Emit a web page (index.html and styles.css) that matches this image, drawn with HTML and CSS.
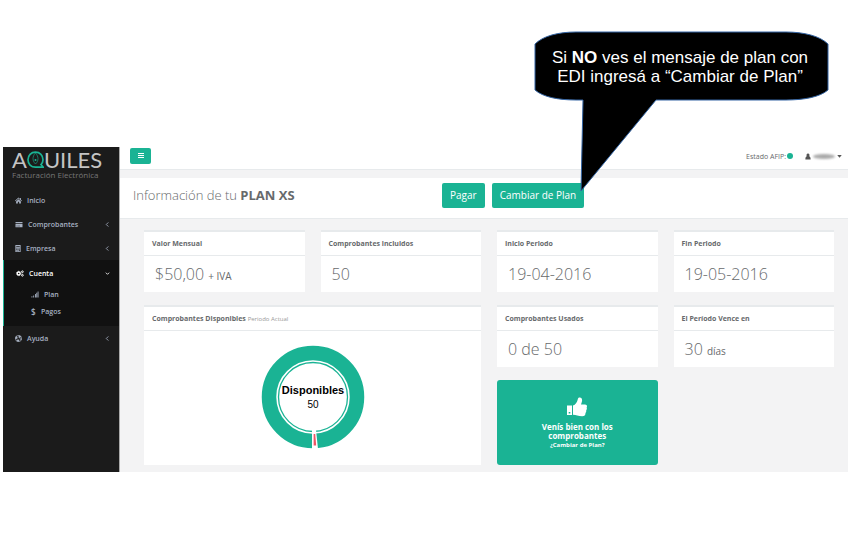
FILE: index.html
```html
<!DOCTYPE html>
<html lang="es">
<head>
<meta charset="utf-8">
<title>Aquiles - Facturación Electrónica</title>
<link rel="stylesheet" href="styles.css">
</head>
<body>
<div class="app">
  <aside class="sidebar">
    <div class="brand">
      <div class="brand-name"><span>A</span><svg class="brand-q" viewBox="0 0 17 18" role="img" aria-label="Q"><path d="M8.500 1.200C4 1.200 1 4.500 1 8.800S4 16.200 8.500 16.200H16.300L14 13.500C15.300 12.300 16 10.800 16 8.800 16 4.500 13 1.200 8.500 1.200Z" fill="none" stroke="#1ab394" stroke-width="1.700"/><path d="M8.500 2C5.200 5.500 5.200 10 8.500 13 11.800 10 11.800 5.500 8.500 2Z" fill="none" stroke="#1ab394" stroke-width=".6"/><circle cx="8.500" cy="9" r="1" fill="#1ab394"/></svg><span>UILES</span></div>
      <div class="brand-sub">Facturación Electrónica</div>
    </div>
    <nav>
      <a class="item" href="#"><svg class="icon" viewBox="0 0 16 16"><path d="M8 1 0 8.500l1.200 1.200L8 3.600l6.800 6.100L16 8.500l-2.500-2.300V2h-2v2.300zM8 5 2.500 10v5h4v-4h3v4h4v-5z"/></svg>Inicio</a>
      <a class="item" href="#"><svg class="icon wide" viewBox="0 0 18 16"><path d="M1 2h16v3H1zM1 7h16v7H1zM3 11v1h3v-1zM7 11v1h4v-1z" fill-rule="evenodd"/></svg>Comprobantes<svg class="chev" viewBox="0 0 6 6"><path d="M4 .5 1.500 3 4 5.500"/></svg></a>
      <a class="item" href="#"><svg class="icon slim" viewBox="0 0 12 16"><path d="M0 0h12v16H0zM2 2v2h8V2zM2 6v2h2V6zm3 0v2h2V6zm3 0v2h2V6zM2 9.500v2h2v-2zm3 0v2h2v-2zM2 13v1.500h5V13zm6-3.500v5h2v-5z" fill-rule="evenodd"/></svg>Empresa<svg class="chev" viewBox="0 0 6 6"><path d="M4 .5 1.500 3 4 5.500"/></svg></a>
      <div class="group">
        <a class="item current" href="#"><svg class="icon wide" viewBox="0 0 18 16"><g fill="none" stroke="currentColor"><circle cx="6" cy="8" r="3.400" stroke-width="3"/><circle cx="6" cy="8" r="5" stroke-width="2" stroke-dasharray="2 1.930"/><circle cx="14.500" cy="4" r="2" stroke-width="2.200"/><circle cx="14.500" cy="12" r="2" stroke-width="2.200"/></g></svg>Cuenta<svg class="chev" viewBox="0 0 6 6"><path d="M1 2 3 4 5 2"/></svg></a>
        <a class="subitem" href="#"><svg class="icon wide" viewBox="0 0 18 16"><path d="M1 12h2v3H1zM5 10h2v5H5zM9 7h2v8H9zM12 4h2v11h-2zM15 1h2v14h-2z"/></svg>Plan</a>
        <a class="subitem" href="#"><span class="dollar">$</span>Pagos</a>
      </div>
      <a class="item" href="#"><svg class="icon" viewBox="0 0 16 16"><g fill="none" stroke="currentColor"><circle cx="8" cy="8" r="7" stroke-width="1.600"/><circle cx="8" cy="8" r="5" stroke-width="5" stroke-dasharray="4.500 3.354" stroke-dashoffset="2.250"/></g></svg>Ayuda<svg class="chev" viewBox="0 0 6 6"><path d="M4 .5 1.500 3 4 5.500"/></svg></a>
    </nav>
  </aside>
  <main class="main">
    <header class="topbar">
      <button class="menu" type="button" aria-label="Menú"><svg viewBox="0 0 8 8"><path d="M1 1.500h6M1 3.500h6M1 5.500h6" stroke="#fff"/></svg></button>
      <div class="status">Estado AFIP:<span class="dot"></span></div>
      <button class="user" type="button" aria-label="Usuario"><svg class="person" viewBox="0 0 8 8"><path d="M4 0a2 2.200 0 0 1 1.400 3.800C7 4 7.500 5.500 7.500 8h-7c0-2.500.5-4 2.100-4.200A2 2.200 0 0 1 4 0z"/></svg><span class="smudge"></span><svg class="caret" viewBox="0 0 6 4"><path d="M0 0h6L3 3.500z"/></svg></button>
    </header>
    <section class="heading">
      <h1>Información de tu <strong>PLAN XS</strong></h1>
      <div class="actions"><button type="button">Pagar</button><button type="button">Cambiar de Plan</button></div>
    </section>
    <section class="cards">
      <article class="card"><h2>Valor Mensual</h2><p>$50,00 <small>+ IVA</small></p></article>
      <article class="card"><h2>Comprobantes incluidos</h2><p>50</p></article>
      <article class="card"><h2>Inicio Periodo</h2><p>19-04-2016</p></article>
      <article class="card"><h2>Fin Periodo</h2><p>19-05-2016</p></article>
      <article class="card chart"><h2>Comprobantes Disponibles <small>Periodo Actual</small></h2>
        <div class="chart-area"><svg class="donut" viewBox="0 0 104 104"><circle cx="52" cy="52" r="44" fill="none" stroke="#1ab394" stroke-width="14.500"/><circle cx="52" cy="52" r="34.500" fill="none" stroke="#1ab394" stroke-width="1.300"/><path d="M51 85h4l2 19h-6z" fill="#fff"/><path d="M52.600 89h1.600l1 11.500h-2.600z" fill="#ed5565"/><text class="donut-label" x="52" y="49">Disponibles</text><text class="donut-value" x="52" y="63">50</text></svg></div>
      </article>
      <article class="card"><h2>Comprobantes Usados</h2><p>0 de 50</p></article>
      <article class="card"><h2>El Período Vence en</h2><p>30 <small>días</small></p></article>
      <a class="notice" href="#"><svg class="thumb" viewBox="0 0 20 20"><path d="M0 8.500h5v9.500H0zM1.700 15v1.600h1.600V15zM6 8.500C8.500 8 10 5 10.600 3 11 1 11.500.5 12.800.5 15 .5 15.500 3 14.800 5L14 7.500h4c1.800 0 2.500 1.500 1.600 3 .5 1 .3 2-.4 2.800.2 1 0 1.900-.7 2.600 0 2.200-1 3.300-3.300 3.300-4 0-6-1.200-9.200-1.500z" fill="#fff" fill-rule="evenodd"/></svg><strong>Venís bien con los comprobantes</strong><small>¿Cambiar de Plan?</small></a>
    </section>
  </main>
</div>
<aside class="callout">
  <svg class="bubble" viewBox="0 0 296 164"><path d="M1 13C9 5 24 1 42 1H252C270 1 286 5 294 13V59C286 66 270 69 252 69H122L47 160 49 69H42C24 69 9 66 1 59Z" fill="#000" stroke="#3465a4"/></svg>
  <p>Si <strong>NO</strong> ves el mensaje de plan con<br> EDI ingresá a “Cambiar de Plan”</p>
</aside>
</body>
</html>
```
FILE: styles.css
```css
* { box-sizing: border-box; }
body { margin: 0; padding: 147px 5px 65px 3px; background: #fff; color: #676a6c; font-family: "Open Sans", sans-serif; font-size: 7px; position: relative; }
h1, h2, p { margin: 0; font-weight: 300; }
a { color: inherit; text-decoration: none; }
button { font: inherit; color: inherit; border: 0; padding: 0; background: none; }
svg { display: block; flex: none; }
.app { display: flex; min-height: 325px; }

.sidebar { width: 117px; flex: none; background: #1b1b1b; color: #a7b1c2; border-right: 1px solid #aaa; font-weight: 600; }
.brand { height: 41px; padding: 2px 9px 0; font-family: Lato, sans-serif; font-weight: 400; color: #c4c4c4; }
.brand-name { display: flex; align-items: center; font-size: 22px; line-height: 22px; }
.brand-q { width: 17px; height: 18px; }
.brand-sub { font-family: "Open Sans", sans-serif; font-size: 8px; line-height: 8px; color: #777; white-space: nowrap; }
.item { display: flex; align-items: center; gap: 5px; height: 24px; padding: 0 9px 0 12px; }
.icon { width: 7px; height: 7px; fill: currentColor; }
.icon.wide { width: 8px; }
.icon.slim { width: 6px; }
.chev { width: 5px; height: 5px; margin-left: auto; fill: none; stroke: currentColor; }
.group { background: #111; border-left: 1px solid #1ab394; padding: 1px 0 6px; }
.current { color: #fff; margin-bottom: 1px; }
.subitem { display: flex; align-items: center; gap: 5px; height: 17px; padding-left: 27px; }
.dollar { width: 5px; font-size: 8px; }

.main { flex: 1; min-width: 0; background: #f3f3f4; }
.topbar { display: flex; align-items: center; height: 23px; padding: 0 6px 4px 10px; background: #fff; border-bottom: 1px solid #e7eaec; }
.menu { display: grid; place-items: center; width: 21px; height: 16px; border-radius: 2px; background: #1ab394; }
.menu svg { width: 8px; height: 8px; }
.status { display: flex; align-items: center; gap: 1px; margin-left: auto; }
.dot { width: 6px; height: 6px; border-radius: 50%; background: #1ab394; }
.user { display: flex; align-items: center; gap: 2px; margin-left: 12px; }
.person { width: 6px; height: 7px; fill: #555; }
.smudge { width: 22px; height: 5px; border-radius: 50%; background: #aaa; filter: blur(1px); }
.caret { width: 5px; height: 3px; fill: #555; }
.heading { display: grid; grid-template-columns: 309px 1fr; align-items: center; height: 41px; margin-top: 8px; padding: 0 13px 6px; background: #fff; border-bottom: 1px solid #e7eaec; }
h1 { font-size: 13px; line-height: 18px; }
h1 strong { font-weight: 700; }
.actions { display: flex; gap: 7px; }
.actions button { height: 25px; padding: 0 8px; border-radius: 2px; background: #1ab394; color: #fff; font-size: 10px; }

.cards { display: grid; grid-template-columns: repeat(4, 1fr); gap: 13px 16px; padding: 11px 14px 7px 24px; }
.card { background: #fff; border-top: 2px solid #e7eaec; }
.card h2 { height: 24px; padding: 0 8px; font-size: 7px; line-height: 23px; font-weight: 700; border-bottom: 1px solid #e7eaec; }
.card h2 small { font-size: 6px; font-weight: 400; color: #999; }
.card p { padding: 6px 11px; font-size: 16px; line-height: 24px; }
.card p small { font-size: 10px; line-height: 1; font-weight: 400; }
.chart { grid-column: span 2; grid-row: span 2; }
.chart-area { display: grid; place-items: center; padding: 14px 0 16px; }
.donut { width: 104px; height: 104px; }
.donut text { font-family: "Liberation Sans", sans-serif; text-anchor: middle; fill: #000; }
.donut-label { font-size: 11px; font-weight: 700; }
.donut-value { font-size: 10px; }
.notice { display: flex; flex-direction: column; align-items: center; height: 85px; padding: 17px 38px 0; border-radius: 3px; background: #1ab394; color: #fff; text-align: center; }
.thumb { width: 20px; height: 20px; margin-bottom: 5px; }
.notice strong { font-size: 8px; line-height: 9px; font-weight: 700; }
.notice small { font-size: 6px; line-height: 10px; font-weight: 700; white-space: nowrap; }

.callout { position: absolute; top: 31px; right: 23px; width: 296px; color: #fff; }
.bubble { width: 296px; height: 164px; }
.callout p { position: absolute; top: 17px; left: 0; right: 4px; font: 400 17px/19px "Liberation Sans", sans-serif; text-align: center; white-space: nowrap; }
```
